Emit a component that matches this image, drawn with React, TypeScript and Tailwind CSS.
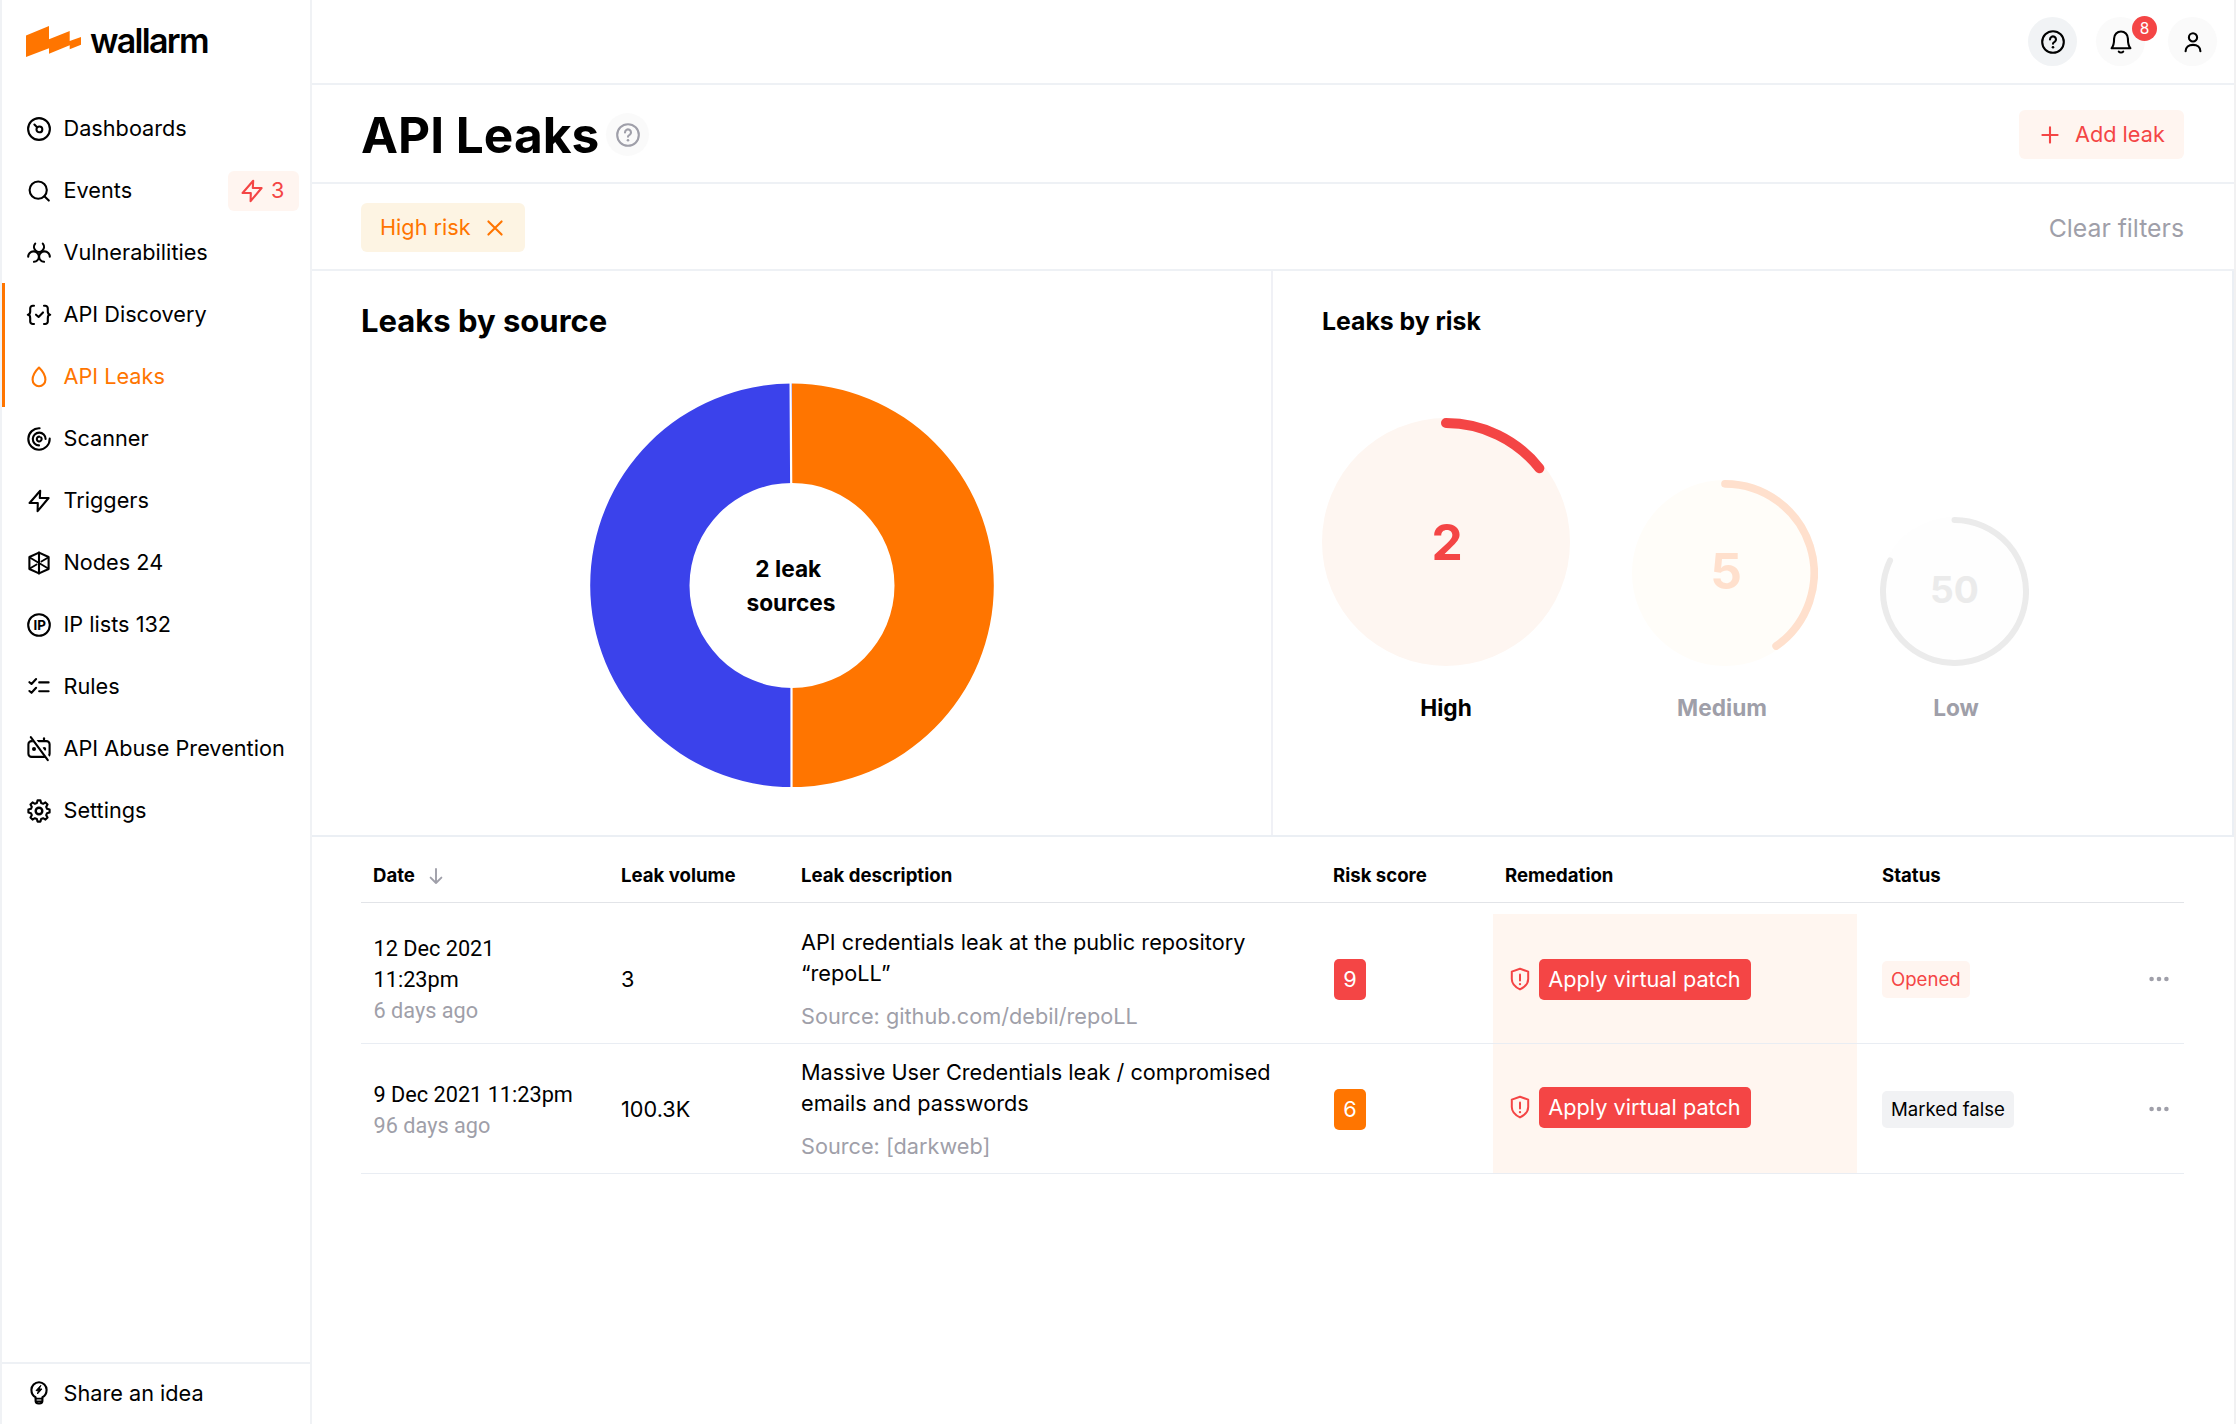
import type { ReactNode } from "react";

type IconProps = { children: ReactNode; size?: number; className?: string; stroke?: number };

/** Icon canvas whose origin sits in the middle of a 28-unit square. */
function Icon({ children, size = 28, className = "", stroke = 2.1 }: IconProps) {
  return (
    <svg
      width={size}
      height={size}
      viewBox="-14 -14 28 28"
      fill="none"
      stroke="currentColor"
      strokeWidth={stroke}
      strokeLinecap="round"
      strokeLinejoin="round"
      className={`shrink-0 ${className}`}
    >
      {children}
    </svg>
  );
}

const ZAP = "M1.2 -10.2L-9.4 2H-1.2L-1.4 10.2L9.6 -3H0.8Z";

const gearPath = (() => {
  const pts: string[] = [];
  for (let i = 0; i < 8; i++) {
    const base = i * 45;
    for (const [offset, r] of [
      [-15, 8.3],
      [-8, 10.7],
      [8, 10.7],
      [15, 8.3],
    ]) {
      const a = ((base + offset - 90) * Math.PI) / 180;
      pts.push(`${(Math.cos(a) * r).toFixed(2)} ${(Math.sin(a) * r).toFixed(2)}`);
    }
  }
  return `M${pts.join("L")}Z`;
})();

function QuestionMark() {
  return (
    <>
      <circle r="10.8" />
      <path d="M-3 -2.6a3 3 0 1 1 4.6 2.5C.5.5 0 .9 0 1.8" />
      <path d="M0 5.2v.1" strokeWidth="2.6" />
    </>
  );
}

const icons: Record<string, ReactNode> = {
  dashboards: (
    <>
      <circle r="10.9" />
      <circle cx="0.4" cy="0.4" r="2.9" />
      <path d="M-4.6 -4.4L-1.9 -1.8" />
    </>
  ),
  events: (
    <>
      <circle cx="-0.8" cy="-0.9" r="8.6" />
      <path d="M5.4 5.3L9.8 9.6" />
    </>
  ),
  vulnerabilities: (
    <>
      <path d="M-3.8 -9.4A5 5 0 1 0 3.8 -9.4" />
      <path d="M-10.8 3.8A5.3 5.3 0 0 1 -5.5 -1.6A5.3 5.3 0 0 1 -0.1 3.8A5.3 5.3 0 0 1 -5 8.8" />
      <path d="M10.8 3.8A5.3 5.3 0 0 0 5.5 -1.6A5.3 5.3 0 0 0 0.1 3.8A5.3 5.3 0 0 0 5 8.8" />
    </>
  ),
  discovery: (
    <>
      <path d="M-5 -9.2h-1.2a2.6 2.6 0 0 0-2.6 2.6v3.2c0 1.8-.8 3.2-2.4 3.2 1.6 0 2.4 1.6 2.4 3.4v3.2a2.6 2.6 0 0 0 2.6 2.6h1.2" />
      <path d="M5 -9.2h1.2a2.6 2.6 0 0 1 2.6 2.6v3.2c0 1.8.8 3.2 2.4 3.2-1.6 0-2.4 1.6-2.4 3.4v3.2a2.6 2.6 0 0 1-2.6 2.6h-1.2" />
      <path d="M-3 -0.3L-0.4 2L4 -2.6" />
    </>
  ),
  leaks: <path d="M0 -9.5C-3 -6.6 -6.4 -1.6 -6.4 2.8a6.4 6.4 0 0 0 12.8 0C6.4 -1.6 3 -6.6 0 -9.5Z" />,
  scanner: (
    <>
      <path d="M0.6 -10.7A10.7 10.7 0 1 0 10.7 -0.4" />
      <path d="M6.6 0A6.4 6.4 0 1 0 0 6.4" />
      <path d="M2.2 -1.3A2.4 2.4 0 1 1 0.6 -2.3" />
    </>
  ),
  triggers: <path d={ZAP} />,
  nodes: (
    <>
      <path d="M0 -10.4L9.6 -6V6L0 10.4L-9.6 6V-6Z" />
      <path d="M0 -10.4V10.4" />
      <path d="M-9.2 -5.6L9.2 5.6M9.2 -5.6L2.4 -1.5M-9.2 5.6L-2.4 1.5" strokeWidth="1.8" />
    </>
  ),
  ip: (
    <>
      <circle r="10.8" />
      <text
        x="0.6"
        y="4.9"
        textAnchor="middle"
        fill="currentColor"
        stroke="none"
        fontFamily="Inter, sans-serif"
        fontWeight="700"
        fontSize="13.4"
      >
        IP
      </text>
    </>
  ),
  rules: (
    <>
      <path d="M-9.6 -4.8L-7.5 -3L-2.9 -8M0.2 -4.6H9.6" />
      <path d="M-9.6 4L-7.5 5.8L-2.9 0.8M0.2 4.2H9.6" />
    </>
  ),
  abuse: (
    <>
      <rect x="-10.6" y="-7.9" width="21.2" height="15.8" rx="3.2" />
      <path d="M5 -10.8V-8" />
      <circle cx="-5" cy="0" r="2" fill="currentColor" stroke="none" />
      <circle cx="5.2" cy="0" r="2" fill="currentColor" stroke="none" />
      <path d="M-7.6 -12.6L10.4 11" stroke="white" strokeWidth="4" />
      <path d="M-8.2 -11.8L8.8 11.2" />
    </>
  ),
  settings: (
    <>
      <path d={gearPath} />
      <circle r="3.3" strokeWidth="2.4" />
    </>
  ),
  idea: (
    <>
      <path d="M-3.4 6V4.2C-5.8 3 -7.6 0.4 -7.6 -3.2a7.6 7.6 0 0 1 15.2 0C7.6 0.4 5.8 3 3.4 4.2V8A2.8 2.8 0 0 1 0.6 10.4H-0.6A2.8 2.8 0 0 1 -3.4 8Z" />
      <path d="M-3.4 5.6H3.4M-3 8.2H3" strokeWidth="1.6" />
      <path d="M1.6 -7.4L-3 -2.4H-0.6L-1.6 1L3 -4H0.6Z" fill="currentColor" strokeWidth="1" />
    </>
  ),
};

type NavItem = { icon: string; label: string; section?: boolean; active?: boolean; count?: number };

const nav: NavItem[] = [
  { icon: "dashboards", label: "Dashboards" },
  { icon: "events", label: "Events", count: 3 },
  { icon: "vulnerabilities", label: "Vulnerabilities" },
  { icon: "discovery", label: "API Discovery", section: true },
  { icon: "leaks", label: "API Leaks", section: true, active: true },
  { icon: "scanner", label: "Scanner" },
  { icon: "triggers", label: "Triggers" },
  { icon: "nodes", label: "Nodes 24" },
  { icon: "ip", label: "IP lists 132" },
  { icon: "rules", label: "Rules" },
  { icon: "abuse", label: "API Abuse Prevention" },
  { icon: "settings", label: "Settings" },
];

function Sidebar() {
  return (
    <aside className="flex w-[312px] shrink-0 flex-col border-x-2 border-[#f0f2f5]">
      <div className="flex h-[97px] items-start pl-6 pt-[26px]">
        <svg width="55" height="31" viewBox="0 0 55 31" className="shrink-0">
          <path
            d="M0 9.4L23 0V13.3L43.7 5V15L55 11V18.7L43.7 23.3V19.3L23 27.7V22.3L0 31Z"
            fill="#ff7500"
          />
        </svg>
        <span className="-mt-[5px] ml-[9px] text-[34px] font-semibold leading-10 tracking-[-1.7px]">wallarm</span>
      </div>
      <nav className="flex-1">
        {nav.map((item) => (
          <div
            key={item.label}
            className={`flex h-[62px] items-center border-l-[3px] pl-5 pr-[11px] pt-px ${
              item.section ? "border-[#ff7500]" : "border-transparent"
            } ${item.active ? "text-[#ff7500]" : ""}`}
          >
            <Icon>{icons[item.icon]}</Icon>
            <span className="ml-[10.5px] whitespace-nowrap">{item.label}</span>
            {item.count !== undefined && (
              <span className="ml-auto flex h-10 w-[71px] items-center gap-[5px] rounded-md bg-[#fff5f0] pl-[10px] text-[#f44545]">
                <Icon>
                  <path d={ZAP} />
                </Icon>
                {item.count}
              </span>
            )}
          </div>
        ))}
      </nav>
      <div className="flex h-[62px] items-center border-t-2 border-[#eef1f5] pb-[2px] pl-[23px]">
        <Icon>{icons.idea}</Icon>
        <span className="ml-[10.5px]">Share an idea</span>
      </div>
    </aside>
  );
}

function TopBar() {
  return (
    <header className="flex h-[85px] items-center justify-end border-b-2 border-[#eef1f5] pr-[17px]">
      <button className="flex size-[49px] items-center justify-center rounded-full bg-[#f1f3f5]">
        <Icon>
          <QuestionMark />
        </Icon>
      </button>
      <button className="relative ml-[19px] flex size-[49px] items-center justify-center rounded-full bg-[#fafafa]">
        <Icon>
          <path d="M-9.4 6.2H9.4C7.4 4.2 6.9 1.6 6.9 -3.4A6.9 7.1 0 0 0 -6.9 -3.4C-6.9 1.6 -7.4 4.2 -9.4 6.2Z" />
          <path d="M-2.2 9.6C-1.2 10.8 1.2 10.8 2.2 9.6" />
        </Icon>
        <span className="absolute -top-px left-9 flex size-[25px] items-center justify-center rounded-full bg-[#f44545] pt-px text-[15.5px] leading-none text-white">
          8
        </span>
      </button>
      <button className="ml-[23px] flex size-[49px] items-center justify-center rounded-full bg-[#fafafa]">
        <Icon>
          <circle cy="-4.6" r="4.1" />
          <path d="M-7.4 9.2C-7.4 5.2 -4.4 2.9 0 2.9S7.4 5.2 7.4 9.2" />
        </Icon>
      </button>
    </header>
  );
}

function Donut() {
  return (
    <div className="relative size-[404px]">
      <svg width="404" height="404" viewBox="-202 -202.4 404 404">
        <path d="M0 -201.8A201.8 201.8 0 0 0 0 201.8V102.5A102.5 102.5 0 0 1 0 -102.5Z" fill="#3b42eb" />
        <path d="M0 -201.8A201.8 201.8 0 0 1 0 201.8V102.5A102.5 102.5 0 0 0 0 -102.5Z" fill="#ff7500" />
        <path d="M-1.4 -203L-0.8 -101M-0.5 101V203" stroke="white" strokeWidth="2.2" />
      </svg>
      <div className="absolute inset-0 flex flex-col items-center justify-center pr-[2px] pt-[2px] text-[22.7px] font-bold leading-[34px]">
        <span className="whitespace-pre">{"2 leak "}</span>
        <span>sources</span>
      </div>
    </div>
  );
}

type RingProps = {
  size: number;
  width: number;
  sweep: number;
  color: string;
  fill: string;
  value: string;
  label: string;
  valueClass: string;
  labelClass: string;
};

function Ring({ size, width, sweep, color, fill, value, label, valueClass, labelClass }: RingProps) {
  const c = size / 2;
  const r = c - width / 2;
  const a = (sweep * Math.PI) / 180;
  return (
    <div className="flex flex-col items-center">
      <div className="relative">
        <svg width={size} height={size} viewBox={`0 0 ${size} ${size}`} className="block">
          <circle cx={c} cy={c} r={c} fill={fill} />
          <path
            d={`M${c} ${c - r}A${r} ${r} 0 ${sweep > 180 ? 1 : 0} 1 ${c + r * Math.sin(a)} ${c - r * Math.cos(a)}`}
            fill="none"
            stroke={color}
            strokeWidth={width}
            strokeLinecap="round"
          />
        </svg>
        <span className={`absolute inset-0 flex items-center justify-center font-bold ${valueClass}`}>{value}</span>
      </div>
      <span className={`mt-[25px] text-[22.7px] font-bold leading-[34px] ${labelClass}`}>{label}</span>
    </div>
  );
}

function Charts() {
  return (
    <div className="flex h-[566px] border-b-2 border-[#ebeff4]">
      <section className="flex w-[961px] flex-col border-r-2 border-[#f0f1f6] pl-[49px] pt-[30px]">
        <h2 className="text-[31px] font-bold leading-10">Leaks by source</h2>
        <div className="ml-[229px] mt-[42px]">
          <Donut />
        </div>
      </section>
      <section className="flex-1 border-r-2 border-[#ebeff4] pl-[49px] pt-[30px]">
        <h2 className="text-[24.8px] font-bold leading-10">Leaks by risk</h2>
        <div className="mt-[77px] flex items-end gap-[62px]">
          <Ring
            size={248}
            width={10}
            sweep={51.7}
            color="#f44545"
            fill="#fef6f1"
            value="2"
            label="High"
            valueClass="pl-[2px] pt-px text-[49.6px] text-[#f44545]"
            labelClass=""
          />
          <Ring
            size={186}
            width={7.7}
            sweep={145}
            color="#ffe0cd"
            fill="#fffdf9"
            value="5"
            label="Medium"
            valueClass="pb-1 pl-[2px] text-[49.6px] text-[#ffe0cd]"
            labelClass="pr-[6px] text-[#9f9fa9]"
          />
          <Ring
            size={149}
            width={6}
            sweep={295.7}
            color="#ebebeb"
            fill="#fefefe"
            value="50"
            label="Low"
            valueClass="pb-[3px] text-[37.2px] text-[#ebebeb]"
            labelClass="pl-[3px] text-[#9f9fa9]"
          />
        </div>
      </section>
    </div>
  );
}

type Leak = {
  date: string[];
  age: string;
  volume: string;
  description: [string, string];
  source: string;
  score: number;
  scoreClass: string;
  patchClass: string;
  status: string;
  statusClass: string;
};

const leaks: Leak[] = [
  {
    date: ["12 Dec 2021", "11:23pm"],
    age: "6 days ago",
    volume: "3",
    description: ["API credentials leak at the public repository", "“repoLL”"],
    source: "Source: github.com/debil/repoLL",
    score: 9,
    scoreClass: "bg-[#f44545]",
    patchClass: "pt-px",
    status: "Opened",
    statusClass: "bg-[#fff5f0] text-[#f44545]",
  },
  {
    date: ["9 Dec 2021 11:23pm"],
    age: "96 days ago",
    volume: "100.3K",
    description: ["Massive User Credentials leak / compromised", "emails and passwords"],
    source: "Source: [darkweb]",
    score: 6,
    scoreClass: "bg-[#ff7500]",
    patchClass: "pb-[3px]",
    status: "Marked false",
    statusClass: "bg-[#f1f2f4]",
  },
];

function LeaksTable() {
  return (
    <div className="ml-[49px] mr-[50px]">
      <div className="grid h-[66px] grid-cols-[248px_181px_532px_171px_364px_1fr] items-center border-b border-[#e2e4e8] pt-[13px] text-[18.6px] font-bold">
        <span className="flex items-center pl-3">
          Date
          <Icon className="ml-[7px] text-[#9f9fa9]" stroke={1.9}>
            <path d="M0 -7V7M-5.4 1.6L0 7L5.4 1.6" />
          </Icon>
        </span>
        <span className="pl-3">Leak volume</span>
        <span className="pl-[11px]">Leak description</span>
        <span className="pl-[11px]">Risk score</span>
        <span className="pl-3">Remedation</span>
        <span className="pl-[25px]">Status</span>
      </div>
      <div className="pt-[11px]">
        {leaks.map((leak) => (
          <div
            key={leak.source}
            className="grid h-[130px] grid-cols-[248px_181px_532px_171px_364px_1fr] border-b border-[#e9edf3] leading-[31px]"
          >
            <div className="flex flex-col justify-center pl-[12.5px] pt-[2px] font-[Roboto]">
              {leak.date.map((line) => (
                <span key={line}>{line}</span>
              ))}
              <span className="text-[#9f9fa9]">{leak.age}</span>
            </div>
            <div className="flex items-center pl-3 pt-px">{leak.volume}</div>
            <div className="flex flex-col justify-center pl-[11px] pt-px">
              <span>{leak.description[0]}</span>
              <span>{leak.description[1]}</span>
              <span className="mt-3 text-[#9f9fa9]">{leak.source}</span>
            </div>
            <div className="flex items-center pl-3 pt-px">
              <span
                className={`flex h-[41px] w-8 items-center justify-center rounded-[5px] text-white ${leak.scoreClass}`}
              >
                {leak.score}
              </span>
            </div>
            <div className={`flex items-center bg-[#fff6f0] pl-[12.5px] ${leak.patchClass}`}>
              <Icon className="text-[#f44545]" stroke={2}>
                <path d="M0 -10.3L8.2 -7.4V0C8.2 5 4.6 8.2 0 10.4C-4.6 8.2 -8.2 5 -8.2 0V-7.4Z" />
                <path d="M0 -4.6V1.4" />
                <path d="M0 5.1v.1" strokeWidth="2.3" />
              </Icon>
              <button className="ml-[5px] flex h-[41px] w-[212px] items-center justify-center rounded-[5px] bg-[#f44545] text-white">
                Apply virtual patch
              </button>
            </div>
            <div className="flex items-center justify-between pl-[25px] pr-[11px] pt-px">
              <span
                className={`flex h-[37px] items-center rounded-[5px] px-[9px] text-[18.6px] ${leak.statusClass}`}
              >
                {leak.status}
              </span>
              <Icon className="text-[#9f9fa9]">
                <g fill="currentColor" stroke="none">
                  <circle cx="-7.4" r="2.3" />
                  <circle r="2.3" />
                  <circle cx="7.4" r="2.3" />
                </g>
              </Icon>
            </div>
          </div>
        ))}
      </div>
    </div>
  );
}

export default function App() {
  return (
    <div className="flex h-[1424px] w-[2236px] overflow-hidden bg-white font-[Inter,sans-serif] text-[21.7px] text-black">
      <Sidebar />
      <main className="flex-1 border-r-2 border-[#f1f1f2]">
        <TopBar />
        <div className="flex h-[99px] items-center border-b-2 border-[#eef1f5] pl-[49px] pr-[50px] pt-[2px]">
          <h1 className="text-[49.6px] font-bold leading-[60px]">API Leaks</h1>
          <span className="ml-[7px] flex size-[43px] items-center justify-center rounded-full bg-[#fafafa] text-[#9f9fa9]">
            <Icon>
              <QuestionMark />
            </Icon>
          </span>
          <button className="ml-auto flex h-[49px] w-[165px] items-center rounded-md bg-[#fff5f0] pl-[17px] text-[#f44545]">
            <Icon>
              <path d="M-7.6 0H7.6M0 -7.6V7.6" />
            </Icon>
            <span className="ml-[11px]">Add leak</span>
          </button>
        </div>
        <div className="flex h-[87px] items-center justify-between border-b-2 border-[#eef1f5] pl-[49px] pr-[50px] pt-[2px]">
          <button className="flex h-[49px] w-[164px] items-center rounded-md bg-[#fdf4e3] pl-[19px] text-[#ff7500]">
            High risk
            <Icon className="ml-[10px]">
              <path d="M-6.6 -6.6L6.6 6.6M6.6 -6.6L-6.6 6.6" />
            </Icon>
          </button>
          <button className="pt-[2px] text-[24.8px] text-[#9f9fa9]">Clear filters</button>
        </div>
        <Charts />
        <LeaksTable />
      </main>
    </div>
  );
}
